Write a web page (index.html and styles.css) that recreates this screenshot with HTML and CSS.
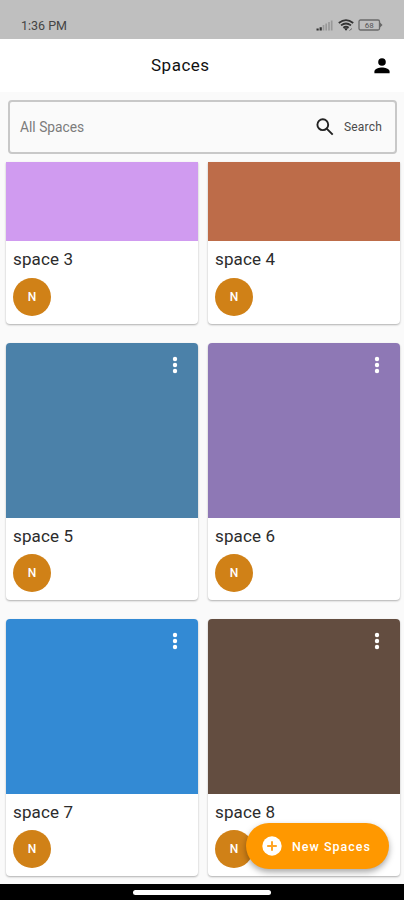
FILE: index.html
```html
<!DOCTYPE html>
<html lang="en">
<head>
  <meta charset="UTF-8" />
  <meta name="viewport" content="width=device-width, initial-scale=1" />
  <title>Spaces</title>
  <link rel="stylesheet" href="styles.css">
</head>
<body>
  <div class="status-bar">
    <span class="clock">1:36 PM</span>
    <svg class="signal" width="17" height="12" viewBox="0 0 17 12">
      <path d="M.5 9.5h2.2v2H.5zM3.6 8.2h2.2v3.3H3.6z" fill="#333"/>
      <path d="M7.5 6v5.5M10.2 4.5v7M13 3v8.5M15.7 1.5v10" stroke="#999" stroke-width="1.7"/>
    </svg>
    <svg class="wifi" width="16" height="13" viewBox="0 0 16 13">
      <path d="M.8 4Q8-1.7 15.2 4M3 6.4Q8 2.6 13 6.4M5.3 8.7Q8 6.8 10.7 8.7" fill="none" stroke="#333" stroke-width="1.8"/>
      <path d="M6 9.3h4l-2 2.5z" fill="#222"/>
      <path d="M11.5 11.5l2.5-2" stroke="#666"/>
    </svg>
    <svg class="battery" width="25" height="12" viewBox="0 0 25 12">
      <rect x="1" y="1" width="20.5" height="10" rx="1.5" fill="none" stroke="#6b6b6b" stroke-width="1.3"/>
      <path d="M22 3.5l2.5 2.5L22 8.5z" fill="#666"/>
      <text x="11.2" y="9" text-anchor="middle" class="battery-level">68</text>
    </svg>
  </div>

  <header class="app-bar">
    <h1>Spaces</h1>
    <svg class="profile" width="16" height="16" viewBox="0 0 16 16">
      <circle cx="8" cy="4" r="3.8"/>
      <path d="M.4 15.2v-1.7C.4 10.8 5.2 9.6 8 9.6s7.6 1.2 7.6 3.9v1.7z"/>
    </svg>
  </header>

  <main class="content">
    <div class="search-box">
      <span class="filter">All Spaces</span>
      <svg class="search-icon" width="18" height="18" viewBox="0 0 18 18">
        <circle cx="6.8" cy="6.7" r="5.4"/>
        <path d="M10.7 10.7l6 6"/>
      </svg>
      <span class="search-label">Search</span>
    </div>

    <div class="grid">
      <div class="card scrolled">
        <div class="cover lilac"></div>
        <div class="info"><div class="name">space 3</div><div class="avatar">N</div></div>
      </div>
      <div class="card scrolled">
        <div class="cover rust"></div>
        <div class="info"><div class="name">space 4</div><div class="avatar">N</div></div>
      </div>
      <div class="card">
        <div class="cover steel">
          <svg class="more" width="6" height="18" viewBox="0 0 6 18"><circle cx="3" cy="3" r="2.2"/><circle cx="3" cy="9" r="2.2"/><circle cx="3" cy="15" r="2.2"/></svg>
        </div>
        <div class="info"><div class="name">space 5</div><div class="avatar">N</div></div>
      </div>
      <div class="card">
        <div class="cover purple">
          <svg class="more" width="6" height="18" viewBox="0 0 6 18"><circle cx="3" cy="3" r="2.2"/><circle cx="3" cy="9" r="2.2"/><circle cx="3" cy="15" r="2.2"/></svg>
        </div>
        <div class="info"><div class="name">space 6</div><div class="avatar">N</div></div>
      </div>
      <div class="card">
        <div class="cover blue">
          <svg class="more" width="6" height="18" viewBox="0 0 6 18"><circle cx="3" cy="3" r="2.2"/><circle cx="3" cy="9" r="2.2"/><circle cx="3" cy="15" r="2.2"/></svg>
        </div>
        <div class="info"><div class="name">space 7</div><div class="avatar">N</div></div>
      </div>
      <div class="card">
        <div class="cover brown">
          <svg class="more" width="6" height="18" viewBox="0 0 6 18"><circle cx="3" cy="3" r="2.2"/><circle cx="3" cy="9" r="2.2"/><circle cx="3" cy="15" r="2.2"/></svg>
        </div>
        <div class="info"><div class="name">space 8</div><div class="avatar">N</div></div>
      </div>
    </div>
  </main>

  <button class="new-space" type="button">
    <svg width="20" height="20" viewBox="0 0 20 20">
      <circle cx="10" cy="10" r="9.7" fill="#fff"/>
      <path d="M10 5.2v9.6M5.2 10h9.6" stroke="#ffa526" stroke-width="2"/>
    </svg>
    <span>New Spaces</span>
  </button>

  <div class="nav-bar"><div class="handle"></div></div>
</body>
</html>
```
FILE: styles.css
```css
* {
  box-sizing: border-box;
}
body {
  margin: 0;
  height: 900px;
  display: flex;
  flex-direction: column;
  position: relative;
  overflow: hidden;
  background-color: #fafafa;
  color: #222;
  font-family: Roboto, "Liberation Sans", sans-serif;
}
svg {
  display: block;
  flex: none;
}

/* Status bar */
.status-bar {
  flex: none;
  display: flex;
  height: 39px;
  padding: 19px 21px 0;
  background-color: #bfbfbf;
}
.clock {
  flex: 1;
  font-size: 12.5px;
  line-height: 14px;
  color: #444;
}
.signal {
  margin-right: 5px;
}
.wifi {
  margin-right: 4px;
}
.battery-level {
  font-size: 8px;
  fill: #555;
}

/* App bar */
.app-bar {
  flex: none;
  display: grid;
  grid-template-columns: 1fr auto;
  align-items: center;
  height: 53px;
  padding-right: 14px;
  background-color: #fff;
}
.app-bar h1 {
  margin: 0 0 2px 151px;
  font-size: 17px;
  font-weight: 400;
  letter-spacing: 0.5px;
  color: #111;
}

/* Search */
.content {
  flex: 1;
  min-height: 0;
}
.search-box {
  display: flex;
  align-items: center;
  height: 54px;
  margin: 8px 7px 8px 8px;
  padding: 0 13px 0 10px;
  border: 2px solid #c8c8c8;
  border-radius: 4px;
}
.filter {
  flex: 1;
  font-size: 13.8px;
  color: #7c7c7c;
}
.search-icon {
  margin-right: 10px;
  fill: none;
  stroke: #222;
  stroke-width: 1.9;
}
.search-label {
  font-size: 12px;
  letter-spacing: 0.2px;
  color: #4a4a4a;
}

/* Cards */
.grid {
  display: grid;
  grid-template-columns: 1fr 1fr;
  gap: 19px 10px;
  padding: 0 4px 0 6px;
}
.card {
  overflow: hidden;
  background-color: #fff;
  border-radius: 4px;
  box-shadow: 0 1px 2px rgba(0, 0, 0, 0.3);
}
.cover {
  display: flex;
  justify-content: flex-end;
  height: 175px;
  padding: 13px 20px 0;
}
.card.scrolled {
  border-radius: 0 0 4px 4px;
}
.scrolled .cover {
  height: 79px;
}
.more {
  fill: #fff;
}
.info {
  height: 82px;
  padding: 8px 7px 0;
}
.scrolled .info {
  height: 83px;
}
.name {
  height: 28px;
  font-size: 17px;
  line-height: 21px;
  letter-spacing: 0.15px;
  color: #2c2c2c;
}
.avatar {
  width: 38px;
  height: 38px;
  border-radius: 50%;
  background-color: #d08117;
  color: #fff;
  font-size: 12px;
  font-weight: 500;
  line-height: 38px;
  text-align: center;
}
.scrolled .avatar {
  margin-top: 1px;
}
.lilac { background-color: #d09bf0; }
.rust { background-color: #bd6c49; }
.steel { background-color: #4b81a9; }
.purple { background-color: #8e78b5; }
.blue { background-color: #338ad4; }
.brown { background-color: #634d40; }

/* Floating button */
.new-space {
  position: absolute;
  right: 15px;
  bottom: 31px;
  display: flex;
  align-items: center;
  gap: 10px;
  width: 143px;
  height: 46px;
  padding: 0 0 0 16px;
  border: 0;
  border-radius: 23px;
  background-color: #ff9800;
  box-shadow: 0 3px 6px rgba(0, 0, 0, 0.35);
  color: #fff;
  font-family: inherit;
  font-size: 12.5px;
  font-weight: 500;
  letter-spacing: 1px;
  white-space: nowrap;
}

/* System navigation */
.nav-bar {
  flex: none;
  height: 16px;
  padding-top: 6px;
  background-color: #000;
}
.handle {
  width: 138px;
  height: 5px;
  margin: 0 auto;
  border-radius: 3px;
  background-color: #fff;
}
```
